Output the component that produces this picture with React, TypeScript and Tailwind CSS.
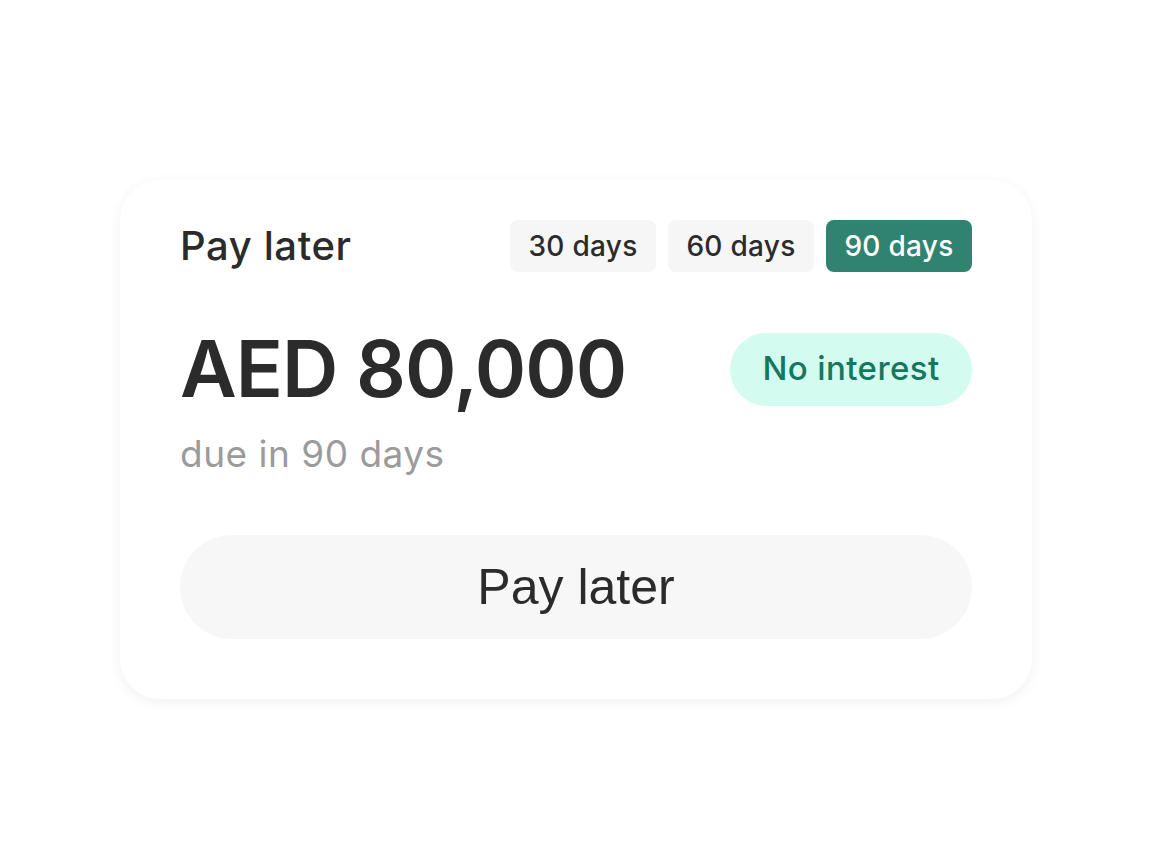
import React from 'react';

const terms = ['30 days', '60 days', '90 days'];

export default function App() {
  const active = '90 days';

  return (
    <div className="min-h-[858px] bg-white pt-[180px] font-['Inter',sans-serif] text-[#2b2b2b]">
      <div className="mx-auto w-[912px] rounded-[40px] bg-white px-[60px] pt-[40px] pb-[60px] shadow-[0_3px_14px_rgba(0,0,0,0.06)]">
        <div className="flex items-center justify-between">
          <h2 className="text-[40px] leading-none font-medium tracking-[0.6px]">Pay later</h2>
          <div className="flex gap-3">
            {terms.map((t) => (
              <button
                key={t}
                className={
                  t === active
                    ? 'h-[52px] w-[146px] rounded-lg bg-[#2f836f] text-[28px] font-medium tracking-[0.3px] text-white'
                    : 'h-[52px] w-[146px] rounded-lg bg-[#f6f6f6] text-[28px] font-medium tracking-[0.3px] text-[#2b2b2b]'
                }
              >
                {t}
              </button>
            ))}
          </div>
        </div>

        <div className="mt-[58px] flex items-center justify-between">
          <div className="text-[78px] leading-none font-semibold tracking-[-1px]">AED 80,000</div>
          <span className="flex h-[73px] w-[242px] items-center justify-center rounded-full bg-[#d4fbef] text-[33px] font-medium tracking-[0.4px] text-[#16775f]">
            No interest
          </span>
        </div>

        <p className="mt-[27px] text-[37px] leading-none tracking-[0.5px] text-[#9b9b9b]">due in 90 days</p>

        <button className="mt-[63px] flex h-[104px] w-full items-center justify-center rounded-full bg-[#f7f7f7] font-['Liberation_Sans',Arial,sans-serif] text-[50px] text-[#2b2b2b]">
          Pay later
        </button>
      </div>
    </div>
  );
}
